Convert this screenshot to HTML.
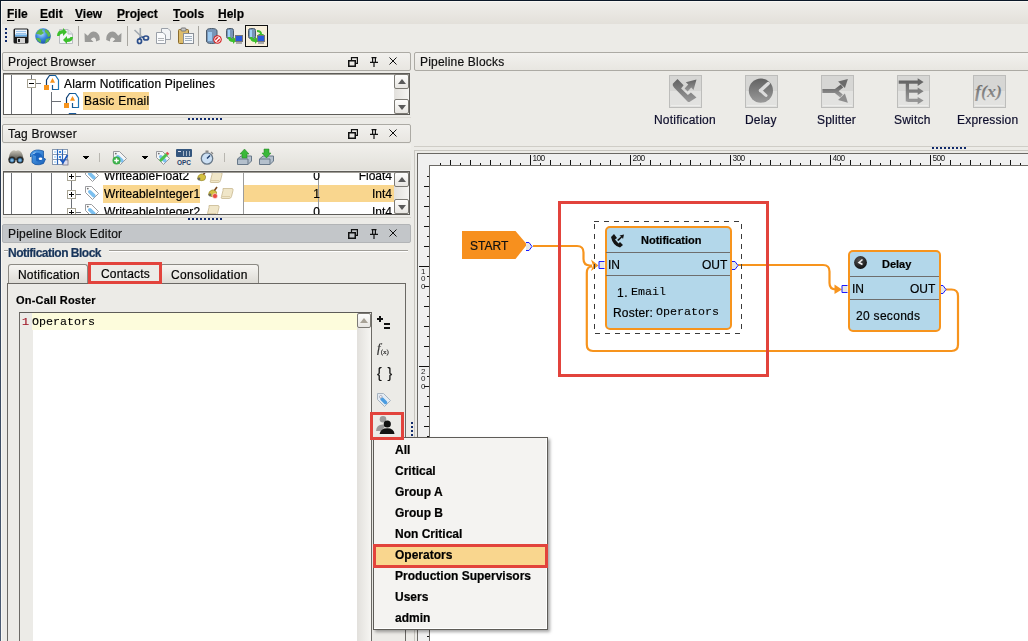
<!DOCTYPE html><html><head><meta charset="utf-8"><style>
*{margin:0;padding:0;box-sizing:border-box}
html,body{width:1028px;height:641px;overflow:hidden;-webkit-font-smoothing:antialiased;background:#ecebe7;font-family:"Liberation Sans",sans-serif;font-size:12px;color:#000}
.a{position:absolute}
.t{position:absolute;white-space:nowrap;line-height:1;will-change:transform;-webkit-text-stroke:0.2px currentColor}
.hdr{position:absolute;border:1px solid #acaaa4;border-radius:2px;background:linear-gradient(#f2f1ee,#e8e6e1)}
.sbb{position:absolute;width:15px;height:15px;border:1px solid #7c7a74;border-radius:2px;background:linear-gradient(#fdfdfc,#e8e6e2)}
.tri-up{position:absolute;left:3px;top:4px;width:0;height:0;border-left:4px solid transparent;border-right:4px solid transparent;border-bottom:5px solid #5a5a5a}
.tri-dn{position:absolute;left:3px;top:5px;width:0;height:0;border-left:4px solid transparent;border-right:4px solid transparent;border-top:5px solid #5a5a5a}
.pal{position:absolute;width:33px;height:33px;border:1px solid #c2c2c0;background:linear-gradient(#d2d2d0,#efefed)}
svg{position:absolute;overflow:visible}
</style></head><body>
<div class="a" style="left:0px;top:1px;width:1028px;height:23px;background:linear-gradient(#f0efeb,#e3e0da);"></div>
<div class="a" style="left:0px;top:0px;width:1028px;height:1px;background:#0a1828;"></div>
<div class="a" style="left:0px;top:0px;width:1px;height:641px;background:linear-gradient(#0a1828,#2c3c52 30%,#4d5d75);"></div>
<div class="a" style="left:1px;top:1px;width:1px;height:640px;background:#f8f7f3;"></div>
<div class="a" style="left:1px;top:1px;width:1027px;height:1px;background:#f8f7f3;"></div>
<div class="t" style="left:7px;top:8px;font-size:12px;font-weight:bold"><u style="text-underline-offset:2px">F</u>ile</div>
<div class="t" style="left:40px;top:8px;font-size:12px;font-weight:bold"><u style="text-underline-offset:2px">E</u>dit</div>
<div class="t" style="left:75px;top:8px;font-size:12px;font-weight:bold"><u style="text-underline-offset:2px">V</u>iew</div>
<div class="t" style="left:117px;top:8px;font-size:12px;font-weight:bold"><u style="text-underline-offset:2px">P</u>roject</div>
<div class="t" style="left:173px;top:8px;font-size:12px;font-weight:bold"><u style="text-underline-offset:2px">T</u>ools</div>
<div class="t" style="left:218px;top:8px;font-size:12px;font-weight:bold"><u style="text-underline-offset:2px">H</u>elp</div>
<div class="a" style="left:5px;top:28px;width:2px;height:2px;background:#102a6c;"></div>
<div class="a" style="left:5px;top:32px;width:2px;height:2px;background:#102a6c;"></div>
<div class="a" style="left:5px;top:36px;width:2px;height:2px;background:#102a6c;"></div>
<div class="a" style="left:5px;top:40px;width:2px;height:2px;background:#102a6c;"></div>
<svg style="left:13px;top:28px" width="16" height="16" viewBox="0 0 16 16"><rect x="0.5" y="0.5" width="15" height="15" rx="1.5" fill="#1c1c1c"/><rect x="2" y="1.5" width="12" height="7" fill="#eef4fb"/><path d="M3 3.5 H13 M3 5.5 H13" stroke="#9cc4ea"/><rect x="2" y="6.5" width="12" height="2" fill="#6aaee6"/><rect x="4" y="10" width="8" height="5" fill="#d4d4d4"/><rect x="5" y="11" width="2" height="3" fill="#222"/></svg>
<svg style="left:35px;top:28px" width="16" height="16" viewBox="0 0 16 16"><defs><radialGradient id="gl" cx="0.4" cy="0.35" r="0.7"><stop offset="0" stop-color="#b8e0ff"/><stop offset="0.5" stop-color="#3a86dc"/><stop offset="1" stop-color="#1a4fa0"/></radialGradient></defs><circle cx="8" cy="8" r="7.8" fill="url(#gl)"/><path d="M1 6 Q3 1 8 1 L7 3 L9 5 L6 7 L3 6 Z M10 1 Q15 3 15.5 8 L13 9 L12 6 L10 4 Z M1 10 L4 10 L6 12 L6 15 Q2 13 1 10 Z M11 11 L15 10 Q14 14 10 15.5 Z" fill="#5db84a"/></svg>
<svg style="left:57px;top:28px" width="16" height="16" viewBox="0 0 16 16"><path d="M2.5 1.5 H11 L15.5 6 V15.5 H2.5 Z" fill="#f4f6f8" stroke="#b8bcc0"/><path d="M11 1.5 V6 H15.5" fill="#e0e4e8" stroke="#b8bcc0"/><path d="M0 8 Q0 2 6 2 V0 L10 4 L6 8 V5.5 Q3 5.5 2.5 8 Z" fill="#3cbf2c"/><path d="M16 9 Q16 14 10 14 V16 L6 12 L10 8 V10.5 Q13 10.5 13.5 9 Z" fill="#3cbf2c"/></svg>
<div class="a" style="left:78px;top:26px;width:1px;height:20px;background:#a8a6a0;"></div>
<svg style="left:84px;top:30px" width="16" height="13" viewBox="0 0 16 13"><path d="M0.5 3 L0.8 12 L9.5 12 L6.8 9.2 Q8.5 7 10.5 7.6 Q12.5 8.5 12 11.5 L15.8 10 Q16.2 4.5 12 2 Q7.5 -0.2 3.8 5.8 Z" fill="#9a9a98"/></svg>
<svg style="left:106px;top:30px" width="16" height="13" viewBox="0 0 16 13"><g transform="translate(16,0) scale(-1,1)"><path d="M0.5 3 L0.8 12 L9.5 12 L6.8 9.2 Q8.5 7 10.5 7.6 Q12.5 8.5 12 11.5 L15.8 10 Q16.2 4.5 12 2 Q7.5 -0.2 3.8 5.8 Z" fill="#9a9a98"/></g></svg>
<div class="a" style="left:127px;top:26px;width:1px;height:20px;background:#a8a6a0;"></div>
<svg style="left:133px;top:27px" width="17" height="17" viewBox="0 0 17 17"><path d="M1.5 3 L9.5 10.5" stroke="#a0a8b0" stroke-width="1.6"/><path d="M7.3 1 V10" stroke="#a0a8b0" stroke-width="1.6"/><path d="M7.3 10 L6.5 12.5 M8.5 10 L11 10.5" stroke="#2c4f8c" stroke-width="1.5"/><ellipse cx="6.5" cy="14.2" rx="2" ry="2.3" fill="none" stroke="#2c4f8c" stroke-width="1.7"/><ellipse cx="13" cy="11" rx="2.5" ry="2" fill="none" stroke="#2c4f8c" stroke-width="1.7"/></svg>
<svg style="left:156px;top:28px" width="16" height="16" viewBox="0 0 16 16"><path d="M5.5 0.5 H12 L14.5 3 V11.5 H5.5 Z" fill="#f2f4f6" stroke="#9aa0a8"/><path d="M0.5 4.5 H7 L9.5 7 V15.5 H0.5 Z" fill="#fafbfc" stroke="#9aa0a8"/><path d="M2 10.5 H8 M2 12.5 H8" stroke="#b0b4b8"/></svg>
<svg style="left:178px;top:28px" width="16" height="16" viewBox="0 0 16 16"><rect x="0.5" y="1.5" width="10" height="14" rx="1" fill="#dcbc6c" stroke="#8a6a2a"/><rect x="3" y="0" width="5" height="3" rx="1" fill="#c8c8c8" stroke="#777"/><rect x="5.5" y="5.5" width="10" height="10" fill="#f6f8fa" stroke="#8a9098"/><path d="M7 8.5 H14 M7 10.5 H14 M7 12.5 H14" stroke="#a0b0c0"/></svg>
<div class="a" style="left:198px;top:26px;width:1px;height:20px;background:#a8a6a0;"></div>
<svg style="left:206px;top:28px" width="16" height="16" viewBox="0 0 16 16"><path d="M0.5 3 Q0.5 0.5 5.5 0.5 Q11 0.5 11 3 V13 Q11 15.5 5.5 15.5 Q0.5 15.5 0.5 13 Z" fill="#7896b8" stroke="#4a5a6a"/><rect x="2" y="4" width="4" height="9" fill="#9ccaf0"/><circle cx="11.5" cy="11.5" r="4.3" fill="#d42020"/><circle cx="11.5" cy="11.5" r="2.8" fill="none" stroke="#fff" stroke-width="1"/><path d="M9.5 13.5 L13.5 9.5" stroke="#fff" stroke-width="1.4"/></svg>
<svg style="left:226px;top:28px" width="17" height="16" viewBox="0 0 17 16"><rect x="0.5" y="0.5" width="7" height="10" rx="2" fill="#7896b8" stroke="#4a5a6a"/><rect x="2" y="2" width="2" height="7" fill="#a0d0f8"/><path d="M2 9 Q2 14 7 14 V16 L10.5 12 L7 8.5 V11 Q4.5 11 4.5 9 Z" fill="#3cbf2c"/><rect x="9.5" y="7.5" width="7" height="6" fill="#2a5adc" stroke="#777"/><rect x="10" y="14" width="6" height="2" fill="#aaa"/></svg>
<div class="a" style="left:245px;top:25px;width:23px;height:22px;background:#f7efdc;border:1px solid #111;box-sizing:border-box"></div>
<svg style="left:248px;top:28px" width="17" height="16" viewBox="0 0 17 16"><rect x="0.5" y="0.5" width="7" height="10" rx="2" fill="#7896b8" stroke="#4a5a6a"/><rect x="2" y="2" width="2" height="7" fill="#a0d0f8"/><path d="M9 2 Q14 2 14 6 H16 L13 9.5 L10 6 H12 Q12 4 9 4 Z" fill="#3cbf2c"/><path d="M2 9 Q2 14 7 14 V16 L10.5 12 L7 8.5 V11 Q4.5 11 4.5 9 Z" fill="#3cbf2c"/><rect x="9.5" y="7.5" width="7" height="6" fill="#2a5adc" stroke="#777"/><rect x="10" y="14" width="6" height="2" fill="#aaa"/></svg>
<div class="hdr" style="left:2px;top:52px;width:409px;height:19px"></div>
<div class="t" style="left:8px;top:56px;font-size:12px;color:#000;letter-spacing:0.2px;color:#111">Project Browser</div>
<svg style="left:348px;top:57px" width="10" height="10" viewBox="0 0 10 10"><rect x="0.75" y="3.75" width="6.5" height="5.5" fill="none" stroke="#111" stroke-width="1.5"/><path d="M3.5 3.5 V0.6 H9.4 V6.4 H7.5" fill="none" stroke="#111" stroke-width="1.2"/></svg>
<svg style="left:370px;top:57px" width="8" height="10" viewBox="0 0 8 10"><path d="M1.5 0.6 H6.5 M2.6 0.6 V5.4 H5.4 V0.6 M0 5.4 H8 M4 5.4 V10" stroke="#111" stroke-width="1.2" fill="none"/></svg>
<svg style="left:389px;top:57px" width="8" height="8" viewBox="0 0 8 8"><path d="M0.5 0.5 L7.5 7.5 M7.5 0.5 L0.5 7.5" stroke="#111" stroke-width="1"/></svg>
<div class="a" style="left:3px;top:73px;width:407px;height:42px;background:#fff;border:1px solid #5e5c58;box-sizing:border-box"></div>
<div class="a" style="left:4px;top:74px;width:405px;height:1px;background:#a09e98;"></div>
<div class="a" style="left:11px;top:75px;width:1px;height:39px;background:#6c7076;"></div>
<div class="a" style="left:31px;top:75px;width:1px;height:4px;background:#6c7076;"></div>
<div class="a" style="left:31px;top:88px;width:1px;height:26px;background:#6c7076;"></div>
<div class="a" style="left:27px;top:79px;width:9px;height:9px;background:#fff;border:1px solid #a8a494;box-sizing:border-box"></div>
<div class="a" style="left:29px;top:83px;width:5px;height:1px;background:#000;"></div>
<div class="a" style="left:36px;top:83px;width:5px;height:1px;background:#6c7076;"></div>
<div class="a" style="left:51px;top:92px;width:1px;height:22px;background:#6c7076;"></div>
<div class="a" style="left:51px;top:101px;width:10px;height:1px;background:#6c7076;"></div>
<svg style="left:44px;top:72px" width="16" height="19" viewBox="0 0 16 19"><defs><linearGradient id="pg" x1="0" x2="1"><stop offset="0" stop-color="#0c3a70"/><stop offset="1" stop-color="#1e78b8"/></linearGradient></defs><path d="M2.5 13 V8 L5.5 3.5 H11.5 L14.5 8 V17.5 H8.5 V13" fill="none" stroke="url(#pg)" stroke-width="1.2"/><path d="M8.5 6 L11 10.8 H6 Z" fill="#f7941d"/><rect x="0" y="13" width="5" height="5" fill="#f7941d"/></svg>
<div class="t" style="left:64px;top:78px;font-size:12px;color:#000;letter-spacing:0.18px">Alarm Notification Pipelines</div>
<svg style="left:64px;top:90px" width="16" height="19" viewBox="0 0 16 19"><defs><linearGradient id="pg" x1="0" x2="1"><stop offset="0" stop-color="#0c3a70"/><stop offset="1" stop-color="#1e78b8"/></linearGradient></defs><path d="M2.5 13 V8 L5.5 3.5 H11.5 L14.5 8 V17.5 H8.5 V13" fill="none" stroke="url(#pg)" stroke-width="1.2"/><path d="M8.5 6 L11 10.8 H6 Z" fill="#f7941d"/><rect x="0" y="13" width="5" height="5" fill="#f7941d"/></svg>
<div class="a" style="left:83px;top:92px;width:66px;height:18px;background:#f9d68e;"></div>
<div class="t" style="left:84px;top:95px;font-size:12px;color:#000;letter-spacing:0.25px">Basic Email</div>
<div class="a" style="left:60px;top:110px;width:30px;height:4px;overflow:hidden">
<svg style="left:4px;top:0" width="16" height="19" viewBox="0 0 16 19"><path d="M2.5 13 V8 L5.5 3.5 H11.5 L14.5 8 V17.5" fill="none" stroke="#1a5a9a" stroke-width="1.2"/></svg></div>
<div class="a" style="left:394px;top:75px;width:15px;height:39px;background:linear-gradient(90deg,#e2e0dc,#f6f5f2);"></div>
<div class="sbb" style="left:394px;top:74px"><div class="tri-up"></div></div>
<div class="sbb" style="left:394px;top:99px"><div class="tri-dn"></div></div>
<div class="a" style="left:3px;top:117px;width:408px;height:1px;background:#dcdad4;"></div>
<div class="a" style="left:188px;top:118px;width:2px;height:2px;background:#102a6c;"></div>
<div class="a" style="left:192px;top:118px;width:2px;height:2px;background:#102a6c;"></div>
<div class="a" style="left:196px;top:118px;width:2px;height:2px;background:#102a6c;"></div>
<div class="a" style="left:200px;top:118px;width:2px;height:2px;background:#102a6c;"></div>
<div class="a" style="left:204px;top:118px;width:2px;height:2px;background:#102a6c;"></div>
<div class="a" style="left:208px;top:118px;width:2px;height:2px;background:#102a6c;"></div>
<div class="a" style="left:212px;top:118px;width:2px;height:2px;background:#102a6c;"></div>
<div class="a" style="left:216px;top:118px;width:2px;height:2px;background:#102a6c;"></div>
<div class="a" style="left:220px;top:118px;width:2px;height:2px;background:#102a6c;"></div>
<div class="hdr" style="left:414px;top:52px;width:620px;height:19px"></div>
<div class="t" style="left:420px;top:56px;font-size:12px;color:#000;letter-spacing:0.2px;color:#111">Pipeline Blocks</div>
<div class="hdr" style="left:2px;top:124px;width:409px;height:19px"></div>
<div class="t" style="left:8px;top:128px;font-size:12px;color:#000;letter-spacing:0.2px;color:#111">Tag Browser</div>
<svg style="left:348px;top:129px" width="10" height="10" viewBox="0 0 10 10"><rect x="0.75" y="3.75" width="6.5" height="5.5" fill="none" stroke="#111" stroke-width="1.5"/><path d="M3.5 3.5 V0.6 H9.4 V6.4 H7.5" fill="none" stroke="#111" stroke-width="1.2"/></svg>
<svg style="left:370px;top:129px" width="8" height="10" viewBox="0 0 8 10"><path d="M1.5 0.6 H6.5 M2.6 0.6 V5.4 H5.4 V0.6 M0 5.4 H8 M4 5.4 V10" stroke="#111" stroke-width="1.2" fill="none"/></svg>
<svg style="left:389px;top:129px" width="8" height="8" viewBox="0 0 8 8"><path d="M0.5 0.5 L7.5 7.5 M7.5 0.5 L0.5 7.5" stroke="#111" stroke-width="1"/></svg>
<div class="a" style="left:2px;top:144px;width:409px;height:26px;background:linear-gradient(#f1f0ec,#e2e0da);"></div>
<svg style="left:8px;top:149px" width="16" height="15" viewBox="0 0 16 15"><defs><radialGradient id="bn" cx="0.5" cy="0.5" r="0.5"><stop offset="0" stop-color="#a8d8f8"/><stop offset="1" stop-color="#2a6aa0"/></radialGradient><linearGradient id="bb" x1="0" y1="0" x2="0" y2="1"><stop offset="0" stop-color="#c8c4b8"/><stop offset="1" stop-color="#4a4a44"/></linearGradient></defs><path d="M0.5 11 Q1 4 4 2 Q6 0.5 8 2 Q10 0.5 12 2 Q15 4 15.5 11 Z" fill="url(#bb)"/><circle cx="4" cy="11" r="3.6" fill="#2a2a28"/><circle cx="12" cy="11" r="3.6" fill="#2a2a28"/><circle cx="4" cy="11.3" r="2.2" fill="url(#bn)"/><circle cx="12" cy="11.3" r="2.2" fill="url(#bn)"/></svg>
<svg style="left:30px;top:149px" width="16" height="16" viewBox="0 0 16 16"><defs><linearGradient id="bl" x1="0" y1="0" x2="1" y2="1"><stop offset="0" stop-color="#5aa8f0"/><stop offset="1" stop-color="#1860b8"/></linearGradient></defs><path d="M0.5 5 Q3 0.5 9 1 L13.5 2 V9 L15.5 10 L13.5 14.5 Q9 16.5 5 15.5 L2 13.5 V6.5 L0.5 8 Z" fill="url(#bl)" stroke="#0c4a9a" stroke-width="0.7"/><path d="M2.5 6 Q5 3 9 4 Q12 5 13 9 L11 12 Q8 13 6 11.5 V7 Z" fill="#1a64c0"/><ellipse cx="10.5" cy="9.8" rx="1.8" ry="1.2" fill="#fff"/><path d="M3.5 5 L5 3.5" stroke="#fff" stroke-width="0.8"/></svg>
<svg style="left:52px;top:149px" width="16" height="16" viewBox="0 0 16 16"><rect x="0.5" y="0.5" width="15" height="15" fill="#fff" stroke="#8a9ab0"/><path d="M5.5 0 V16 M10.5 0 V16 M0 5.5 H16 M0 10.5 H16" stroke="#8a9ab0"/><path d="M5.5 0.5 V15.5 M10.5 0.5 V15.5" stroke="#2a64b8" stroke-width="1.2"/><rect x="2" y="2" width="2" height="2" fill="#bfe0fa"/><rect x="7" y="2" width="2" height="2" fill="#3a8ae0"/><rect x="12" y="2" width="2" height="2" fill="#bfe0fa"/><rect x="2" y="7" width="2" height="2" fill="#bfe0fa"/><rect x="7" y="7" width="2" height="2" fill="#3a8ae0"/><rect x="2" y="12" width="2" height="2" fill="#bfe0fa"/><rect x="11" y="11" width="5" height="5" fill="#dde" stroke="#778" stroke-width="0.8"/><path d="M8 10 L11 13.5 L15.5 6" stroke="#1a58c0" stroke-width="1.8" fill="none"/></svg>
<div class="a" style="left:83px;top:156px;width:6px;height:1px;background:#000;"></div>
<div class="a" style="left:84px;top:157px;width:4px;height:1px;background:#000;"></div>
<div class="a" style="left:85px;top:158px;width:2px;height:1px;background:#000;"></div>
<div class="a" style="left:99px;top:153px;width:1px;height:9px;background:#b8b6b0;"></div>
<svg style="left:112px;top:150px" width="15" height="15" viewBox="0 0 15 15"><path d="M1.5 1.5 H7.5 L14.5 8.5 L8.5 14.5 L1.5 7.5 Z" fill="#f4f6f8" stroke="#8e9094" stroke-width="0.9"/><path d="M5.8 6.8 L9.8 10.6" stroke="#7cc0f0" stroke-width="3.6" stroke-linecap="round"/><circle cx="3.8" cy="3.6" r="0.9" fill="#707070"/><circle cx="4.5" cy="10.5" r="4" fill="#3cb04a"/><path d="M2.2 10.5 H6.8 M4.5 8.2 V12.8" stroke="#fff" stroke-width="1.4"/></svg>
<div class="a" style="left:142px;top:156px;width:6px;height:1px;background:#000;"></div>
<div class="a" style="left:143px;top:157px;width:4px;height:1px;background:#000;"></div>
<div class="a" style="left:144px;top:158px;width:2px;height:1px;background:#000;"></div>
<svg style="left:155px;top:150px" width="15" height="15" viewBox="0 0 15 15"><path d="M1.5 1.5 H7.5 L14.5 8.5 L8.5 14.5 L1.5 7.5 Z" fill="#f4f6f8" stroke="#8e9094" stroke-width="0.9"/><path d="M5.8 6.8 L9.8 10.6" stroke="#7cc0f0" stroke-width="3.6" stroke-linecap="round"/><circle cx="3.8" cy="3.6" r="0.9" fill="#707070"/><path d="M5 11 L12 4" stroke="#4cc04a" stroke-width="3"/><path d="M11.5 2.5 L13.5 4.5" stroke="#e04848" stroke-width="2.2"/></svg>
<svg style="left:176px;top:149px" width="16" height="16" viewBox="0 0 16 16"><rect x="0" y="0" width="16" height="8" rx="1" fill="#34567e"/><path d="M7.5 2 V7 M10.5 2 V7 M13.5 2 V7" stroke="#a8b8c8"/><rect x="2" y="2" width="3" height="1" fill="#dde"/><text x="1" y="15.5" font-size="8" font-weight="bold" fill="#25406a" font-family="Liberation Sans" textLength="14" lengthAdjust="spacingAndGlyphs">OPC</text></svg>
<svg style="left:200px;top:150px" width="14" height="15" viewBox="0 0 14 15"><circle cx="7" cy="8.5" r="5.7" fill="#cce0f4" stroke="#687888" stroke-width="1.3"/><path d="M7 8.5 L10 5.5" stroke="#1a3a6a" stroke-width="1.5"/><rect x="5.5" y="0.5" width="3" height="2" fill="#888"/><path d="M11 2 L13 4" stroke="#888" stroke-width="1.2"/></svg>
<div class="a" style="left:224px;top:153px;width:1px;height:9px;background:#b8b6b0;"></div>
<svg style="left:237px;top:149px" width="15" height="16" viewBox="0 0 15 16"><path d="M0.5 10 L4 7 H14.5 V12 L11 15.5 H0.5 Z" fill="#b4c0cc" stroke="#687888"/><path d="M0.5 10 H11 V15.5" fill="none" stroke="#687888"/><path d="M5 9 V5 H3 L7.5 0 L12 5 H10 V9 Z" fill="#3ab83a" stroke="#1e801e" stroke-width="0.5"/></svg>
<svg style="left:259px;top:149px" width="15" height="16" viewBox="0 0 15 16"><path d="M0.5 10 L4 7 H14.5 V12 L11 15.5 H0.5 Z" fill="#b4c0cc" stroke="#687888"/><path d="M0.5 10 H11 V15.5" fill="none" stroke="#687888"/><path d="M5 0 V4 H3 L7.5 9 L12 4 H10 V0 Z" fill="#3ab83a" stroke="#1e801e" stroke-width="0.5"/></svg>
<div class="a" style="left:3px;top:171px;width:407px;height:44px;background:#fff;border:1px solid #5e5c58;box-sizing:border-box"></div>
<div class="a" style="left:4px;top:172px;width:405px;height:1px;background:#a09e98;"></div>
<div class="a" style="left:4px;top:173px;width:390px;height:41px;overflow:hidden">
<div class="a" style="left:7px;top:0px;width:1px;height:41px;background:#6c7076;"></div>
<div class="a" style="left:27px;top:0px;width:1px;height:41px;background:#6c7076;"></div>
<div class="a" style="left:47px;top:0px;width:1px;height:41px;background:#6c7076;"></div>
<div class="a" style="left:67px;top:0px;width:1px;height:41px;background:#6c7076;"></div>
<div class="a" style="left:99px;top:12px;width:97px;height:18px;background:#f9d68e;"></div>
<div class="a" style="left:240px;top:12px;width:74px;height:17px;background:#f9d68e;"></div>
<div class="a" style="left:315px;top:12px;width:75px;height:17px;background:#f9d68e;"></div>
<div class="a" style="left:239px;top:0px;width:1px;height:41px;background:#9c9c9c;"></div>
<div class="a" style="left:314px;top:0px;width:1px;height:41px;background:#9c9c9c;"></div>
<div class="a" style="left:63px;top:-1px;width:9px;height:9px;background:#fff;border:1px solid #a8a494;box-sizing:border-box"></div>
<div class="a" style="left:65px;top:3px;width:5px;height:1px;background:#000;"></div>
<div class="a" style="left:67px;top:1px;width:1px;height:5px;background:#000;"></div>
<div class="a" style="left:72px;top:3px;width:5px;height:1px;background:#6c7076;"></div>
<svg style="left:80px;top:-6px" width="16" height="16" viewBox="0 0 16 16"><path d="M1.5 1.5 H7.5 L14.5 8.5 L8.5 14.5 L1.5 7.5 Z" fill="#ffffff" stroke="#8e9094" stroke-width="0.9"/><path d="M5.8 6.8 L9.8 10.6" stroke="#7cc0f0" stroke-width="3.6" stroke-linecap="round"/><circle cx="3.8" cy="3.6" r="0.9" fill="#707070"/></svg>
<div class="a" style="left:63px;top:17px;width:9px;height:9px;background:#fff;border:1px solid #a8a494;box-sizing:border-box"></div>
<div class="a" style="left:65px;top:21px;width:5px;height:1px;background:#000;"></div>
<div class="a" style="left:67px;top:19px;width:1px;height:5px;background:#000;"></div>
<div class="a" style="left:72px;top:21px;width:5px;height:1px;background:#6c7076;"></div>
<svg style="left:80px;top:12px" width="16" height="16" viewBox="0 0 16 16"><path d="M1.5 1.5 H7.5 L14.5 8.5 L8.5 14.5 L1.5 7.5 Z" fill="#ffffff" stroke="#8e9094" stroke-width="0.9"/><path d="M5.8 6.8 L9.8 10.6" stroke="#7cc0f0" stroke-width="3.6" stroke-linecap="round"/><circle cx="3.8" cy="3.6" r="0.9" fill="#707070"/></svg>
<div class="a" style="left:63px;top:35px;width:9px;height:9px;background:#fff;border:1px solid #a8a494;box-sizing:border-box"></div>
<div class="a" style="left:65px;top:39px;width:5px;height:1px;background:#000;"></div>
<div class="a" style="left:67px;top:37px;width:1px;height:5px;background:#000;"></div>
<div class="a" style="left:72px;top:39px;width:5px;height:1px;background:#6c7076;"></div>
<svg style="left:80px;top:30px" width="16" height="16" viewBox="0 0 16 16"><path d="M1.5 1.5 H7.5 L14.5 8.5 L8.5 14.5 L1.5 7.5 Z" fill="#ffffff" stroke="#8e9094" stroke-width="0.9"/><path d="M5.8 6.8 L9.8 10.6" stroke="#7cc0f0" stroke-width="3.6" stroke-linecap="round"/><circle cx="3.8" cy="3.6" r="0.9" fill="#707070"/></svg>
<div class="t" style="left:100px;top:-3px;font-size:12px;letter-spacing:0.1px">WriteableFloat2</div>
<div class="t" style="left:239px;width:77px;text-align:right;top:-3px;font-size:12px">0</div>
<div class="t" style="left:314px;width:74px;text-align:right;top:-3px;font-size:12px">Float4</div>
<div class="t" style="left:100px;top:15px;font-size:12px;letter-spacing:0.1px">WriteableInteger1</div>
<div class="t" style="left:239px;width:77px;text-align:right;top:15px;font-size:12px">1</div>
<div class="t" style="left:314px;width:74px;text-align:right;top:15px;font-size:12px">Int4</div>
<div class="t" style="left:100px;top:33px;font-size:12px;letter-spacing:0.1px">WriteableInteger2</div>
<div class="t" style="left:239px;width:77px;text-align:right;top:33px;font-size:12px">0</div>
<div class="t" style="left:314px;width:74px;text-align:right;top:33px;font-size:12px">Int4</div>
<svg style="left:193px;top:-1px" width="10" height="11"><path d="M0.5 7 Q0.5 3 4 2 Q6 1.5 7.5 3 L8.5 4 Q9 6 7.5 8 Q4 10 0.5 7 Z" fill="#d4c040" stroke="#8a7a18" stroke-width="0.6"/><path d="M6.5 2.5 L9 -1" stroke="#7a4a20" stroke-width="1.6"/><circle cx="2" cy="7" r="1.4" fill="#6a6a60"/></svg>
<svg style="left:206px;top:-1px" width="13" height="12"><path d="M2 0.5 H11 Q12.5 0.5 12 2.5 L10.5 8.5 Q10 10.5 8 10.5 H1 Q-0.5 10.5 0.5 8.5 L2 2.5 Z" fill="#f0e6c8" stroke="#c8b890" stroke-width="0.8"/><path d="M1 8.5 H9" stroke="#d8c8a0" stroke-width="0.8"/></svg>
<svg style="left:204px;top:15px" width="10" height="11"><path d="M0.5 7 Q0.5 3 4 2 Q6 1.5 7.5 3 L8.5 4 Q9 6 7.5 8 Q4 10 0.5 7 Z" fill="#d4c040" stroke="#8a7a18" stroke-width="0.6"/><path d="M6.5 2.5 L9 -1" stroke="#7a4a20" stroke-width="1.6"/><circle cx="2" cy="7" r="1.4" fill="#6a6a60"/><circle cx="7" cy="8" r="2.5" fill="#e84a40" stroke="#fff" stroke-width="0.5"/></svg>
<svg style="left:217px;top:15px" width="13" height="12"><path d="M2 0.5 H11 Q12.5 0.5 12 2.5 L10.5 8.5 Q10 10.5 8 10.5 H1 Q-0.5 10.5 0.5 8.5 L2 2.5 Z" fill="#f0e6c8" stroke="#c8b890" stroke-width="0.8"/><path d="M1 8.5 H9" stroke="#d8c8a0" stroke-width="0.8"/></svg>
<svg style="left:203px;top:32px" width="13" height="12"><path d="M2 0.5 H11 Q12.5 0.5 12 2.5 L10.5 8.5 Q10 10.5 8 10.5 H1 Q-0.5 10.5 0.5 8.5 L2 2.5 Z" fill="#f0e6c8" stroke="#c8b890" stroke-width="0.8"/><path d="M1 8.5 H9" stroke="#d8c8a0" stroke-width="0.8"/></svg>
</div>
<div class="a" style="left:394px;top:173px;width:15px;height:41px;background:linear-gradient(90deg,#e2e0dc,#f6f5f2);"></div>
<div class="sbb" style="left:394px;top:172px"><div class="tri-up"></div></div>
<div class="sbb" style="left:394px;top:199px"><div class="tri-dn"></div></div>
<div class="a" style="left:3px;top:217px;width:408px;height:1px;background:#d4d2cc;"></div>
<div class="a" style="left:188px;top:218px;width:2px;height:2px;background:#102a6c;"></div>
<div class="a" style="left:192px;top:218px;width:2px;height:2px;background:#102a6c;"></div>
<div class="a" style="left:196px;top:218px;width:2px;height:2px;background:#102a6c;"></div>
<div class="a" style="left:200px;top:218px;width:2px;height:2px;background:#102a6c;"></div>
<div class="a" style="left:204px;top:218px;width:2px;height:2px;background:#102a6c;"></div>
<div class="a" style="left:208px;top:218px;width:2px;height:2px;background:#102a6c;"></div>
<div class="a" style="left:212px;top:218px;width:2px;height:2px;background:#102a6c;"></div>
<div class="a" style="left:216px;top:218px;width:2px;height:2px;background:#102a6c;"></div>
<div class="a" style="left:220px;top:218px;width:2px;height:2px;background:#102a6c;"></div>
<div class="hdr" style="left:2px;top:224px;width:409px;height:19px;background:#c3c6c9;border-color:#b2b4b6"></div>
<div class="t" style="left:8px;top:228px;font-size:12px;color:#000;letter-spacing:0.2px;color:#111">Pipeline Block Editor</div>
<svg style="left:348px;top:229px" width="10" height="10" viewBox="0 0 10 10"><rect x="0.75" y="3.75" width="6.5" height="5.5" fill="none" stroke="#111" stroke-width="1.5"/><path d="M3.5 3.5 V0.6 H9.4 V6.4 H7.5" fill="none" stroke="#111" stroke-width="1.2"/></svg>
<svg style="left:370px;top:229px" width="8" height="10" viewBox="0 0 8 10"><path d="M1.5 0.6 H6.5 M2.6 0.6 V5.4 H5.4 V0.6 M0 5.4 H8 M4 5.4 V10" stroke="#111" stroke-width="1.2" fill="none"/></svg>
<svg style="left:389px;top:229px" width="8" height="8" viewBox="0 0 8 8"><path d="M0.5 0.5 L7.5 7.5 M7.5 0.5 L0.5 7.5" stroke="#111" stroke-width="1"/></svg>
<div class="a" style="left:4px;top:250px;width:4px;height:1px;background:#a09e98;"></div>
<div class="a" style="left:4px;top:251px;width:4px;height:1px;background:#fff;"></div>
<div class="a" style="left:109px;top:250px;width:299px;height:1px;background:#a09e98;"></div>
<div class="a" style="left:109px;top:251px;width:299px;height:1px;background:#fff;"></div>
<div class="t" style="left:8px;top:247px;font-size:12px;font-weight:bold;color:#17345a;letter-spacing:-0.5px">Notification Block</div>
<div class="a" style="left:8px;top:264px;width:80px;height:20px;background:linear-gradient(#f6f5f2,#dcdad4);border:1px solid #8c8a84;border-bottom:none;border-radius:3px 3px 0 0;box-sizing:border-box"></div>
<div class="t" style="left:18px;top:269px;font-size:12px;color:#000;letter-spacing:0.2px">Notification</div>
<div class="a" style="left:160px;top:264px;width:99px;height:20px;background:linear-gradient(#f6f5f2,#dcdad4);border:1px solid #8c8a84;border-bottom:none;border-radius:3px 3px 0 0;box-sizing:border-box"></div>
<div class="t" style="left:171px;top:269px;font-size:12px;color:#000;letter-spacing:0.3px">Consolidation</div>
<div class="a" style="left:7px;top:283px;width:399px;height:360px;background:#ecebe7;border:1px solid #6a6864;border-bottom:none;box-sizing:border-box"></div>
<div class="a" style="left:88px;top:262px;width:73px;height:22px;background:#ecebe7;"></div>
<div class="a" style="left:88px;top:262px;width:74px;height:22px;background:transparent;border:3px solid #e2433c;box-sizing:border-box"></div>
<div class="t" style="left:101px;top:268px;font-size:12px;color:#000;letter-spacing:0.2px">Contacts</div>
<div class="t" style="left:16px;top:295px;font-size:11px;font-weight:bold;color:#000;letter-spacing:0.2px">On-Call Roster</div>
<div class="a" style="left:19px;top:312px;width:353px;height:340px;background:#fff;border:1px solid #6c6a66;border-top:1px solid #5e5c58;box-sizing:border-box"></div>
<div class="a" style="left:20px;top:313px;width:13px;height:328px;background:#ecebe7;"></div>
<div class="a" style="left:32px;top:313px;width:325px;height:17px;background:#fdfcdc;"></div>
<div class="t" style="left:22px;top:317px;font-size:12px;color:#a01828;font-family:Liberation Mono;font-size:11.67px">1</div>
<div class="t" style="left:32px;top:317px;font-size:12px;color:#000;font-family:Liberation Mono;font-size:11.67px;-webkit-text-stroke:0.1px #000">Operators</div>
<div class="a" style="left:357px;top:313px;width:14px;height:328px;background:linear-gradient(90deg,#e2e0dc,#f6f5f2);"></div>
<div class="sbb" style="left:357px;top:313px;width:14px"><div class="tri-up" style="left:2px;border-bottom-color:#a8a296"></div></div>
<div class="a" style="left:377px;top:318px;width:6px;height:2px;background:#111;"></div>
<div class="a" style="left:379px;top:316px;width:2px;height:6px;background:#111;"></div>
<div class="a" style="left:384px;top:323px;width:6px;height:2px;background:#111;"></div>
<div class="a" style="left:384px;top:327px;width:6px;height:2px;background:#111;"></div>
<div class="t" style="left:377px;top:341px;font-size:13px;font-style:italic;font-family:Liberation Serif;color:#333">f<span style="font-size:7px;font-style:normal;position:relative;top:2px">(x)</span></div>
<div class="t" style="left:377px;top:366px;font-size:14px;font-family:Liberation Sans;color:#111;letter-spacing:1px">{ }</div>
<svg style="left:376px;top:392px" width="16" height="16" viewBox="0 0 16 16"><path d="M1.5 1.5 H7.5 L14.5 8.5 L8.5 14.5 L1.5 7.5 Z" fill="#e4ecf4" stroke="#a8b4c0"/><path d="M6 7 L9.5 10.5" stroke="#4a9ce0" stroke-width="3.5" stroke-linecap="round"/><circle cx="4.8" cy="4.8" r="1.3" fill="#fff" stroke="#aab"/></svg>
<div class="a" style="left:411px;top:422px;width:2px;height:2px;background:#102a6c;"></div>
<div class="a" style="left:411px;top:426px;width:2px;height:2px;background:#102a6c;"></div>
<div class="a" style="left:411px;top:430px;width:2px;height:2px;background:#102a6c;"></div>
<div class="a" style="left:411px;top:434px;width:2px;height:2px;background:#102a6c;"></div>
<svg style="left:669px;top:75px" width="33" height="33" viewBox="0 0 33 33"><rect x="0" y="0" width="33" height="33" fill="#bdbdbb"/><rect x="1" y="1" width="31" height="31" fill="#d6d6d4"/><rect x="1" y="16" width="31" height="16" fill="#e2e2e0"/><rect x="2" y="30" width="29" height="1" fill="#ededeb"/></svg>
<div class="t" style="left:654px;top:114px;font-size:12px;color:#0e0e2c;letter-spacing:0.2px">Notification</div>
<svg style="left:745px;top:75px" width="33" height="33" viewBox="0 0 33 33"><rect x="0" y="0" width="33" height="33" fill="#bdbdbb"/><rect x="1" y="1" width="31" height="31" fill="#d6d6d4"/><rect x="1" y="16" width="31" height="16" fill="#e2e2e0"/><rect x="2" y="30" width="29" height="1" fill="#ededeb"/></svg>
<div class="t" style="left:745px;top:114px;font-size:12px;color:#0e0e2c;letter-spacing:0.2px">Delay</div>
<svg style="left:821px;top:75px" width="33" height="33" viewBox="0 0 33 33"><rect x="0" y="0" width="33" height="33" fill="#bdbdbb"/><rect x="1" y="1" width="31" height="31" fill="#d6d6d4"/><rect x="1" y="16" width="31" height="16" fill="#e2e2e0"/><rect x="2" y="30" width="29" height="1" fill="#ededeb"/></svg>
<div class="t" style="left:817px;top:114px;font-size:12px;color:#0e0e2c;letter-spacing:0.2px">Splitter</div>
<svg style="left:897px;top:75px" width="33" height="33" viewBox="0 0 33 33"><rect x="0" y="0" width="33" height="33" fill="#bdbdbb"/><rect x="1" y="1" width="31" height="31" fill="#d6d6d4"/><rect x="1" y="16" width="31" height="16" fill="#e2e2e0"/><rect x="2" y="30" width="29" height="1" fill="#ededeb"/></svg>
<div class="t" style="left:894px;top:114px;font-size:12px;color:#0e0e2c;letter-spacing:0.2px">Switch</div>
<svg style="left:973px;top:75px" width="33" height="33" viewBox="0 0 33 33"><rect x="0" y="0" width="33" height="33" fill="#bdbdbb"/><rect x="1" y="1" width="31" height="31" fill="#d6d6d4"/><rect x="1" y="16" width="31" height="16" fill="#e2e2e0"/><rect x="2" y="30" width="29" height="1" fill="#ededeb"/></svg>
<div class="t" style="left:957px;top:114px;font-size:12px;color:#0e0e2c;letter-spacing:0.2px">Expression</div>
<svg style="left:669px;top:75px" width="33" height="33" viewBox="0 0 33 33"><defs><linearGradient id="PG1" x1="0" y1="0" x2="0" y2="1"><stop offset="0" stop-color="#626262"/><stop offset="1" stop-color="#9a9a9a"/></linearGradient></defs><path d="M8.5 4.1 L3.8 8.8 Q3.2 10.6 5 12.4 L18.5 26.5 Q19.8 27.6 21.2 26.5 L27.5 22.5 L21.9 17.4 L18.9 20.1 L12.1 13.4 L14.6 10.2 Z" fill="url(#PG1)"/><path d="M27.5 4.4 L16.8 7.3 L19.3 9.6 L15.6 13.6 L18.6 16.5 L22.2 12.6 L24.5 15 Z" fill="url(#PG1)"/></svg>
<svg style="left:745px;top:75px" width="33" height="33" viewBox="0 0 33 33"><defs><linearGradient id="PG2" x1="0" y1="0" x2="0" y2="1"><stop offset="0" stop-color="#626262"/><stop offset="1" stop-color="#9a9a9a"/></linearGradient></defs><circle cx="15.9" cy="15.6" r="12.1" fill="url(#PG2)"/><path d="M15.5 15.5 L23.2 8.5" stroke="#dcdcdc" stroke-width="3.4" stroke-linecap="round"/><path d="M15.5 15.5 L21 20.5" stroke="#dcdcdc" stroke-width="3" stroke-linecap="round"/></svg>
<svg style="left:821px;top:75px" width="33" height="33" viewBox="0 0 33 33"><defs><linearGradient id="PG3" x1="0" y1="0" x2="0" y2="1"><stop offset="0" stop-color="#626262"/><stop offset="1" stop-color="#9a9a9a"/></linearGradient></defs><path d="M1.4 16 H14.5 L21 11 M14.5 16 L20.5 21" stroke="url(#PG3)" stroke-width="4" fill="none"/><path d="M26.9 4.1 L17.1 6.5 L23.9 13 Z" fill="#6a6a6a"/><path d="M26.9 27.8 L17.1 25.1 L23.9 18.6 Z" fill="#8e8e8e"/></svg>
<svg style="left:897px;top:75px" width="33" height="33" viewBox="0 0 33 33"><defs><linearGradient id="PG4" x1="0" y1="0" x2="0" y2="1"><stop offset="0" stop-color="#626262"/><stop offset="1" stop-color="#9a9a9a"/></linearGradient></defs><path d="M1.7 7.2 H21 M10.4 5.6 V26.6 M10.4 16.2 H21 M10.4 25.4 H21" stroke="url(#PG4)" stroke-width="3.3" fill="none"/><path d="M20.7 3.2 L26.6 7.1 L20.7 10.9 Z" fill="#666"/><path d="M20.7 12.5 L26.6 16.2 L20.7 19.9 Z" fill="#7e7e7e"/><path d="M20.7 21.9 L26.6 25.6 L20.7 29.3 Z" fill="#939393"/></svg>
<svg style="left:973px;top:75px" width="33" height="33" viewBox="0 0 33 33"><defs><linearGradient id="PG5" x1="0" y1="0" x2="0" y2="1"><stop offset="0" stop-color="#626262"/><stop offset="1" stop-color="#9a9a9a"/></linearGradient></defs><text x="2" y="21.5" font-family="Liberation Serif" font-style="italic" font-weight="bold" font-size="17" textLength="27" lengthAdjust="spacingAndGlyphs" fill="url(#PG5)">f(x)</text></svg>
<div class="a" style="left:932px;top:147px;width:2px;height:2px;background:#102a6c;"></div>
<div class="a" style="left:936px;top:147px;width:2px;height:2px;background:#102a6c;"></div>
<div class="a" style="left:940px;top:147px;width:2px;height:2px;background:#102a6c;"></div>
<div class="a" style="left:944px;top:147px;width:2px;height:2px;background:#102a6c;"></div>
<div class="a" style="left:948px;top:147px;width:2px;height:2px;background:#102a6c;"></div>
<div class="a" style="left:952px;top:147px;width:2px;height:2px;background:#102a6c;"></div>
<div class="a" style="left:956px;top:147px;width:2px;height:2px;background:#102a6c;"></div>
<div class="a" style="left:960px;top:147px;width:2px;height:2px;background:#102a6c;"></div>
<div class="a" style="left:964px;top:147px;width:2px;height:2px;background:#102a6c;"></div>
<div class="a" style="left:414px;top:146px;width:614px;height:1px;background:#cfcdc7;"></div>
<div class="a" style="left:414px;top:150px;width:614px;height:491px;background:#ecebe7;border-left:1px solid #c8c6c0;border-top:1px solid #c8c6c0;box-sizing:border-box"></div>
<div class="a" style="left:417px;top:153px;width:611px;height:488px;background:#f0f0f0;border-left:1px solid #6a6864;border-top:1px solid #6a6864;box-sizing:border-box"></div>
<div class="a" style="left:429px;top:165px;width:599px;height:476px;background:#fff;border-left:1px solid #6a6864;border-top:1px solid #6a6864;box-sizing:border-box"></div>
<svg style="left:0;top:0" width="1028" height="641"><rect x="440" y="163" width="1" height="2" fill="#111"/><rect x="450" y="160" width="1" height="5" fill="#111"/><rect x="460" y="163" width="1" height="2" fill="#111"/><rect x="470" y="160" width="1" height="5" fill="#111"/><rect x="480" y="163" width="1" height="2" fill="#111"/><rect x="490" y="160" width="1" height="5" fill="#111"/><rect x="500" y="163" width="1" height="2" fill="#111"/><rect x="510" y="160" width="1" height="5" fill="#111"/><rect x="520" y="163" width="1" height="2" fill="#111"/><rect x="530" y="155" width="1" height="10" fill="#111"/><text x="532.5" y="161" font-size="8.4" letter-spacing="-0.6" fill="#222" font-family="Liberation Sans">100</text><rect x="540" y="163" width="1" height="2" fill="#111"/><rect x="550" y="160" width="1" height="5" fill="#111"/><rect x="560" y="163" width="1" height="2" fill="#111"/><rect x="570" y="160" width="1" height="5" fill="#111"/><rect x="580" y="163" width="1" height="2" fill="#111"/><rect x="590" y="160" width="1" height="5" fill="#111"/><rect x="600" y="163" width="1" height="2" fill="#111"/><rect x="610" y="160" width="1" height="5" fill="#111"/><rect x="620" y="163" width="1" height="2" fill="#111"/><rect x="630" y="155" width="1" height="10" fill="#111"/><text x="632.5" y="161" font-size="8.4" letter-spacing="-0.6" fill="#222" font-family="Liberation Sans">200</text><rect x="640" y="163" width="1" height="2" fill="#111"/><rect x="650" y="160" width="1" height="5" fill="#111"/><rect x="660" y="163" width="1" height="2" fill="#111"/><rect x="670" y="160" width="1" height="5" fill="#111"/><rect x="680" y="163" width="1" height="2" fill="#111"/><rect x="690" y="160" width="1" height="5" fill="#111"/><rect x="700" y="163" width="1" height="2" fill="#111"/><rect x="710" y="160" width="1" height="5" fill="#111"/><rect x="720" y="163" width="1" height="2" fill="#111"/><rect x="730" y="155" width="1" height="10" fill="#111"/><text x="732.5" y="161" font-size="8.4" letter-spacing="-0.6" fill="#222" font-family="Liberation Sans">300</text><rect x="740" y="163" width="1" height="2" fill="#111"/><rect x="750" y="160" width="1" height="5" fill="#111"/><rect x="760" y="163" width="1" height="2" fill="#111"/><rect x="770" y="160" width="1" height="5" fill="#111"/><rect x="780" y="163" width="1" height="2" fill="#111"/><rect x="790" y="160" width="1" height="5" fill="#111"/><rect x="800" y="163" width="1" height="2" fill="#111"/><rect x="810" y="160" width="1" height="5" fill="#111"/><rect x="820" y="163" width="1" height="2" fill="#111"/><rect x="830" y="155" width="1" height="10" fill="#111"/><text x="832.5" y="161" font-size="8.4" letter-spacing="-0.6" fill="#222" font-family="Liberation Sans">400</text><rect x="840" y="163" width="1" height="2" fill="#111"/><rect x="850" y="160" width="1" height="5" fill="#111"/><rect x="860" y="163" width="1" height="2" fill="#111"/><rect x="870" y="160" width="1" height="5" fill="#111"/><rect x="880" y="163" width="1" height="2" fill="#111"/><rect x="890" y="160" width="1" height="5" fill="#111"/><rect x="900" y="163" width="1" height="2" fill="#111"/><rect x="910" y="160" width="1" height="5" fill="#111"/><rect x="920" y="163" width="1" height="2" fill="#111"/><rect x="930" y="155" width="1" height="10" fill="#111"/><text x="932.5" y="161" font-size="8.4" letter-spacing="-0.6" fill="#222" font-family="Liberation Sans">500</text><rect x="940" y="163" width="1" height="2" fill="#111"/><rect x="950" y="160" width="1" height="5" fill="#111"/><rect x="960" y="163" width="1" height="2" fill="#111"/><rect x="970" y="160" width="1" height="5" fill="#111"/><rect x="980" y="163" width="1" height="2" fill="#111"/><rect x="990" y="160" width="1" height="5" fill="#111"/><rect x="1000" y="163" width="1" height="2" fill="#111"/><rect x="1010" y="160" width="1" height="5" fill="#111"/><rect x="1020" y="163" width="1" height="2" fill="#111"/><rect x="427" y="176" width="2" height="1" fill="#111"/><rect x="424" y="186" width="5" height="1" fill="#111"/><rect x="427" y="196" width="2" height="1" fill="#111"/><rect x="424" y="206" width="5" height="1" fill="#111"/><rect x="427" y="216" width="2" height="1" fill="#111"/><rect x="424" y="226" width="5" height="1" fill="#111"/><rect x="427" y="236" width="2" height="1" fill="#111"/><rect x="424" y="246" width="5" height="1" fill="#111"/><rect x="427" y="256" width="2" height="1" fill="#111"/><rect x="419" y="266" width="10" height="1" fill="#111"/><text x="421" y="273.8" font-size="8" fill="#222" font-family="Liberation Sans">1</text><text x="421" y="281.40000000000003" font-size="8" fill="#222" font-family="Liberation Sans">0</text><text x="421" y="289.0" font-size="8" fill="#222" font-family="Liberation Sans">0</text><rect x="427" y="276" width="2" height="1" fill="#111"/><rect x="424" y="286" width="5" height="1" fill="#111"/><rect x="427" y="296" width="2" height="1" fill="#111"/><rect x="424" y="306" width="5" height="1" fill="#111"/><rect x="427" y="316" width="2" height="1" fill="#111"/><rect x="424" y="326" width="5" height="1" fill="#111"/><rect x="427" y="336" width="2" height="1" fill="#111"/><rect x="424" y="346" width="5" height="1" fill="#111"/><rect x="427" y="356" width="2" height="1" fill="#111"/><rect x="419" y="366" width="10" height="1" fill="#111"/><text x="421" y="373.8" font-size="8" fill="#222" font-family="Liberation Sans">2</text><text x="421" y="381.40000000000003" font-size="8" fill="#222" font-family="Liberation Sans">0</text><text x="421" y="389.0" font-size="8" fill="#222" font-family="Liberation Sans">0</text><rect x="427" y="376" width="2" height="1" fill="#111"/><rect x="424" y="386" width="5" height="1" fill="#111"/><rect x="427" y="396" width="2" height="1" fill="#111"/><rect x="424" y="406" width="5" height="1" fill="#111"/><rect x="427" y="416" width="2" height="1" fill="#111"/><rect x="424" y="426" width="5" height="1" fill="#111"/><rect x="427" y="436" width="2" height="1" fill="#111"/><rect x="424" y="446" width="5" height="1" fill="#111"/><rect x="427" y="456" width="2" height="1" fill="#111"/><rect x="419" y="466" width="10" height="1" fill="#111"/><text x="421" y="473.8" font-size="8" fill="#222" font-family="Liberation Sans">3</text><text x="421" y="481.40000000000003" font-size="8" fill="#222" font-family="Liberation Sans">0</text><text x="421" y="489.0" font-size="8" fill="#222" font-family="Liberation Sans">0</text><rect x="427" y="476" width="2" height="1" fill="#111"/><rect x="424" y="486" width="5" height="1" fill="#111"/><rect x="427" y="496" width="2" height="1" fill="#111"/><rect x="424" y="506" width="5" height="1" fill="#111"/><rect x="427" y="516" width="2" height="1" fill="#111"/><rect x="424" y="526" width="5" height="1" fill="#111"/><rect x="427" y="536" width="2" height="1" fill="#111"/><rect x="424" y="546" width="5" height="1" fill="#111"/><rect x="427" y="556" width="2" height="1" fill="#111"/><rect x="419" y="566" width="10" height="1" fill="#111"/><text x="421" y="573.8" font-size="8" fill="#222" font-family="Liberation Sans">4</text><text x="421" y="581.4" font-size="8" fill="#222" font-family="Liberation Sans">0</text><text x="421" y="589.0" font-size="8" fill="#222" font-family="Liberation Sans">0</text><rect x="427" y="576" width="2" height="1" fill="#111"/><rect x="424" y="586" width="5" height="1" fill="#111"/><rect x="427" y="596" width="2" height="1" fill="#111"/><rect x="424" y="606" width="5" height="1" fill="#111"/><rect x="427" y="616" width="2" height="1" fill="#111"/><rect x="424" y="626" width="5" height="1" fill="#111"/><rect x="427" y="636" width="2" height="1" fill="#111"/></svg>
<svg style="left:0;top:0" width="1028" height="641"><path d="M462 231 H515.5 L527 244.5 L515.5 259 H462 Z" fill="#f7901e"/><path d="M533 246 H577 Q583.5 246 583.5 252.5 V259 Q583.5 265.5 590 265.5 H592" stroke="#f7941d" stroke-width="2.2" fill="none"/><path d="M738 265 H823 Q829.5 265 829.5 271.5 V283 Q829.5 289.5 836 289.5 H837" stroke="#f7941d" stroke-width="2.2" fill="none"/><path d="M946 289.5 H951.5 Q958 289.5 958 296 V344.5 Q958 351 951.5 351 H593 Q586.8 351 586.8 344.5 V273 Q586.8 266.5 592 266.5" stroke="#f7941d" stroke-width="2.2" fill="none"/><path d="M591 259.5 L598.5 265.5 L591 271 L593 265.5 Z" fill="#f7941d"/><path d="M834.5 284.5 L842 289.5 L834.5 294 Z" fill="#f7941d"/><rect x="559.5" y="202.5" width="208" height="173" fill="none" stroke="#e2433c" stroke-width="3"/><g stroke="#3a3a3a" stroke-width="1" stroke-dasharray="5 5" fill="none"><path d="M594 221.5 H742"/><path d="M595 333.5 H742"/><path d="M594.5 224 V334"/><path d="M741.5 224 V334"/></g></svg>
<div class="t" style="left:470px;top:240px;font-size:12px;color:#111;">START</div>
<svg style="left:526px;top:242px" width="7" height="9"><path d="M0 0.5 H3 L6 4.5 L3 8.5 H0" stroke="#1a1aff" fill="#e6e6e6"/></svg>
<svg style="left:598px;top:261px" width="7" height="8"><path d="M6.5 0.5 H1 V7.5 H6.5" stroke="#1a1aff" fill="#e6e6e6"/></svg>
<svg style="left:732px;top:261px" width="7" height="9"><path d="M0 0.5 H3 L6 4.5 L3 8.5 H0" stroke="#1a1aff" fill="#e6e6e6"/></svg>
<svg style="left:841px;top:285px" width="7" height="8"><path d="M6.5 0.5 H1 V7.5 H6.5" stroke="#1a1aff" fill="#e6e6e6"/></svg>
<svg style="left:940px;top:285px" width="7" height="9"><path d="M0 0.5 H3 L6 4.5 L3 8.5 H0" stroke="#1a1aff" fill="#e6e6e6"/></svg>
<div class="a" style="left:605px;top:226px;width:127px;height:104px;background:#b3d7ea;border:2px solid #f7941d;border-radius:5px;box-sizing:border-box"></div>
<div class="a" style="left:606px;top:252px;width:124px;height:1px;background:#6e6e6e;"></div>
<div class="a" style="left:606px;top:275px;width:124px;height:1px;background:#6e6e6e;"></div>
<svg style="left:610px;top:233px" width="14" height="15" viewBox="0 0 14 15"><path d="M1 4 L4 1 L7 5 L5 6.5 L8.5 10.5 L10 9 L13 12 L10 14.5 Q3 13 1 4 Z" fill="#151515"/><path d="M7 7 L11 3.5 L9.5 2.5 L14 1.5 L13 6 L12 4.5 L8.5 8 Z" fill="#151515"/></svg>
<div class="t" style="left:641px;top:235px;font-size:11px;font-weight:bold;color:#000;">Notification</div>
<div class="t" style="left:608px;top:259px;font-size:12px;color:#000;">IN</div>
<div class="t" style="left:702px;top:259px;font-size:12px;color:#000;">OUT</div>
<div class="t" style="left:617px;top:287px;font-size:12px;color:#000;letter-spacing:0.5px">1.</div>
<div class="t" style="left:631px;top:287px;font-size:12px;color:#000;font-family:Liberation Mono;font-size:11.67px;-webkit-text-stroke:0.1px #000">Email</div>
<div class="t" style="left:613px;top:307px;font-size:12px;color:#000;letter-spacing:0.2px">Roster:</div>
<div class="t" style="left:656px;top:307px;font-size:12px;color:#000;font-family:Liberation Mono;font-size:11.67px;-webkit-text-stroke:0.1px #000">Operators</div>
<div class="a" style="left:848px;top:250px;width:93px;height:82px;background:#b3d7ea;border:2px solid #f7941d;border-radius:5px;box-sizing:border-box"></div>
<div class="a" style="left:850px;top:276px;width:89px;height:1px;background:#6e6e6e;"></div>
<div class="a" style="left:850px;top:299px;width:89px;height:1px;background:#6e6e6e;"></div>
<svg style="left:854px;top:256px" width="13" height="13" viewBox="0 0 13 13"><defs><radialGradient id="dcg" cx="0.4" cy="0.3" r="0.7"><stop offset="0" stop-color="#555"/><stop offset="1" stop-color="#111"/></radialGradient></defs><circle cx="6.5" cy="6.5" r="6.4" fill="url(#dcg)"/><path d="M8.5 3.5 L5 6.5 L8.5 8.5" stroke="#f0f0f0" stroke-width="1.6" fill="none"/></svg>
<div class="t" style="left:882px;top:259px;font-size:11px;font-weight:bold;color:#000;">Delay</div>
<div class="t" style="left:852px;top:283px;font-size:12px;color:#000;">IN</div>
<div class="t" style="left:910px;top:283px;font-size:12px;color:#000;">OUT</div>
<div class="t" style="left:856px;top:310px;font-size:12px;color:#000;letter-spacing:0.3px">20 seconds</div>
<div class="a" style="left:373px;top:437px;width:175px;height:193px;background:#f4f3f1;border:1px solid #5e5c58;box-sizing:border-box;box-shadow:2px 2px 3px rgba(0,0,0,0.35),inset -1px -1px 0 #fff"></div>
<div class="a" style="left:373px;top:544px;width:175px;height:24px;background:#f9d68e;border:3px solid #e2433c;box-sizing:border-box"></div>
<div class="t" style="left:395px;top:444px;font-size:12px;font-weight:bold;color:#000;">All</div>
<div class="t" style="left:395px;top:465px;font-size:12px;font-weight:bold;color:#000;">Critical</div>
<div class="t" style="left:395px;top:486px;font-size:12px;font-weight:bold;color:#000;">Group A</div>
<div class="t" style="left:395px;top:507px;font-size:12px;font-weight:bold;color:#000;">Group B</div>
<div class="t" style="left:395px;top:528px;font-size:12px;font-weight:bold;color:#000;">Non Critical</div>
<div class="t" style="left:395px;top:549px;font-size:12px;font-weight:bold;color:#000;">Operators</div>
<div class="t" style="left:395px;top:570px;font-size:12px;font-weight:bold;color:#000;">Production Supervisors</div>
<div class="t" style="left:395px;top:591px;font-size:12px;font-weight:bold;color:#000;">Users</div>
<div class="t" style="left:395px;top:612px;font-size:12px;font-weight:bold;color:#000;">admin</div>
<div class="a" style="left:370px;top:412px;width:34px;height:28px;background:transparent;border:3px solid #e2433c;box-sizing:border-box"></div>
<svg style="left:376px;top:414px" width="20" height="21" viewBox="0 0 20 21"><circle cx="7" cy="5.2" r="3.3" fill="#9a9a9a"/><path d="M0 17 Q0.5 10.5 6.5 10.5 Q8.5 10.5 9.5 11.5 L6 17 Z" fill="#9a9a9a"/><circle cx="11.3" cy="10" r="3.6" fill="#111"/><path d="M3.6 20 Q4.5 14.2 11.3 14.2 Q18 14.2 18.5 20 Z" fill="#111"/></svg>
</body></html>
